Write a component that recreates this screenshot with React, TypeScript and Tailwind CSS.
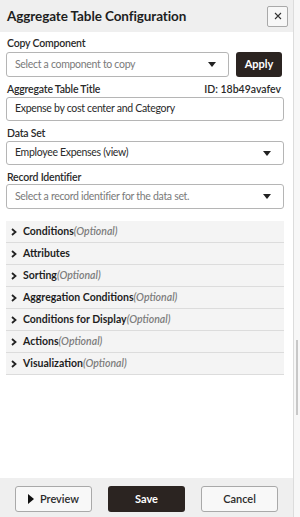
import React from "react";

const font = { fontFamily: "Lato, 'Open Sans', sans-serif" };

function Caret() {
  return (
    <svg width="8" height="5" viewBox="0 0 8 5" className="shrink-0">
      <path d="M0 0 L8 0 L4 5 Z" fill="#222" />
    </svg>
  );
}

function Chevron() {
  return (
    <svg width="6" height="8" viewBox="0 0 6 8" className="shrink-0">
      <path d="M1 1 L4.5 4 L1 7" stroke="#222" strokeWidth="1.8" fill="none" />
    </svg>
  );
}

function Label({ children }: { children: React.ReactNode }) {
  return <div className="h-[14px] leading-[14px] text-[10.5px] font-semibold tracking-[-0.2px] text-[#2a2a2a] pl-[1px]">{children}</div>;
}

function Select({ text, placeholder, h }: { text: string; placeholder?: boolean; h: string }) {
  return (
    <div className={`${h} border border-[#b5b5b5] rounded-[3px] bg-white flex items-center justify-between pl-[8px] pr-[12px]`}>
      <span className={`text-[10.5px] tracking-[-0.3px] ${placeholder ? "text-[#7a7a7a]" : "text-[#2a2a2a]"}`}>{text}</span>
      <Caret />
    </div>
  );
}

const rows: [string, boolean][] = [
  ["Conditions", true],
  ["Attributes", false],
  ["Sorting", true],
  ["Aggregation Conditions", true],
  ["Conditions for Display", true],
  ["Actions", true],
  ["Visualization", true],
];

export default function App() {
  return (
    <div className="w-[300px] h-[517px] flex bg-white overflow-hidden" style={font}>
      <div className="w-[294px] h-full flex flex-col border-r border-[#dcdcdc]">
        <div className="h-[32px] shrink-0 bg-[#efefef] flex items-center justify-between pl-[7px] pr-[5px]">
          <span className="text-[13.5px] font-bold text-[#1e1e1e] tracking-[-0.1px]">Aggregate Table Configuration</span>
          <div className="w-[21px] h-[21px] border border-[#a9a9a9] rounded-[2px] bg-[#f7f7f7] flex items-center justify-center">
            <svg width="8" height="8" viewBox="0 0 8 8">
              <path d="M1 1 L7 7 M7 1 L1 7" stroke="#333" strokeWidth="1.1" />
            </svg>
          </div>
        </div>
        <div className="flex-1 flex flex-col pl-[6px] pr-[9px]">
          <div className="mt-[4px]"><Label>Copy Component</Label></div>
          <div className="mt-[2px] flex gap-[7px]">
            <div className="w-[223px]"><Select h="h-[25px]" text="Select a component to copy" placeholder /></div>
            <div className="w-[46px] h-[25px] rounded-[3px] bg-[#2b2421] text-white text-[11px] font-bold flex items-center justify-center">Apply</div>
          </div>
          <div className="mt-[5px] flex justify-between pr-[3px]">
            <Label>Aggregate Table Title</Label>
            <span className="text-[10.5px] font-semibold leading-[14px] text-[#2a2a2a]">ID: 18b49avafev</span>
          </div>
          <div className="mt-[1px] h-[24px] border border-[#b5b5b5] rounded-[3px] flex items-center pl-[8px] text-[10.5px] tracking-[-0.3px] text-[#2a2a2a]">Expense by cost center and Category</div>
          <div className="mt-[5px]"><Label>Data Set</Label></div>
          <div className="mt-[1px]"><Select h="h-[24px]" text="Employee Expenses (view)" /></div>
          <div className="mt-[5px]"><Label>Record Identifier</Label></div>
          <div><Select h="h-[25px]" text="Select a record identifier for the data set." placeholder /></div>
          <div className="mt-[12px] flex flex-col">
            {rows.map(([name, opt]) => (
              <div key={name} className="h-[22px] bg-[#f4f4f4] border-b border-[#dcdcdc] flex items-center pl-[5px] gap-[6px]">
                <Chevron />
                <span className="text-[10.5px] font-bold text-[#1e1e1e]">
                  {name}
                  {opt && <span className="italic font-semibold text-[#7d7d7d]">(Optional)</span>}
                </span>
              </div>
            ))}
          </div>
        </div>
        <div className="h-[39px] shrink-0 bg-[#efefef] flex items-start justify-center gap-[16px] pt-[8px]">
          <div className="w-[77px] h-[26px] border border-[#a9a9a9] rounded-[3px] bg-[#f8f8f8] flex items-center justify-center gap-[6px]">
            <svg width="6" height="10" viewBox="0 0 6 10"><path d="M0 0 L6 5 L0 10 Z" fill="#111" /></svg>
            <span className="text-[11px] font-semibold text-[#2a2a2a]">Preview</span>
          </div>
          <div className="w-[77px] h-[26px] rounded-[3px] bg-[#2b2421] flex items-center justify-center">
            <span className="text-[11px] font-bold text-white">Save</span>
          </div>
          <div className="w-[77px] h-[26px] border border-[#a9a9a9] rounded-[3px] bg-[#f8f8f8] flex items-center justify-center">
            <span className="text-[11px] font-semibold text-[#2a2a2a]">Cancel</span>
          </div>
        </div>
      </div>
      <div className="flex-1 bg-[#f7f7f7] flex flex-col">
        <div className="mt-[340px] ml-[2px] w-[2px] h-[75px] bg-[#c8c8c8]" />
      </div>
    </div>
  );
}
